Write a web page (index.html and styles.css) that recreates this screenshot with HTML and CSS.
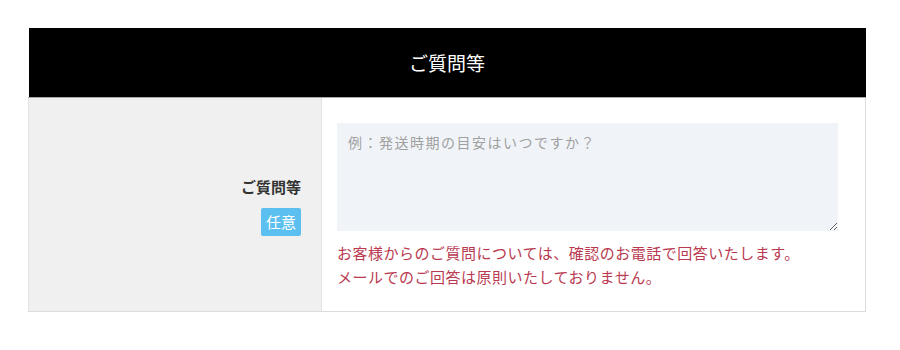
FILE: index.html
```html
<!DOCTYPE html>
<html lang="ja">
<head>
  <meta charset="utf-8">
  <title>ご質問等</title>
  <link rel="stylesheet" href="styles.css">
</head>
<body>

  <table class="form-table">
    <thead>
      <tr>
        <th colspan="2" class="form-title">ご質問等</th>
      </tr>
    </thead>
    <tbody>
      <tr>
        <th class="field-label">
          <span class="label-text">ご質問等</span>
          <span class="badge">任意</span>
        </th>
        <td class="field-body">
          <textarea class="question" placeholder="例：発送時期の目安はいつですか？"></textarea>
          <p class="note">お客様からのご質問については、確認のお電話で回答いたします。<br>メールでのご回答は原則いたしておりません。</p>
        </td>
      </tr>
    </tbody>
  </table>

</body>
</html>
```

FILE: styles.css
```css
body {
  margin: 0;
  padding: 28px 34px 0 28px;
  background-color: #fff;
  font-family: "Noto Sans CJK JP", "Noto Sans", sans-serif;
  color: #333;
}

.form-table {
  width: 838px;
  border-collapse: collapse;
}

.form-title {
  height: 69px;
  padding: 0;
  background-color: #000;
  color: #fff;
  font-size: 19px;
  font-weight: normal;
  text-align: center;
  border-bottom: 1px solid #a8a8a8;
}

.field-label {
  width: 272px;
  padding: 0 20px 0 0;
  background-color: #f0f0f0;
  border-left: 1px solid #e2e2e2;
  border-right: 1px solid #e2e2e2;
  border-bottom: 1px solid #dcdcdc;
  text-align: right;
  vertical-align: middle;
}

.label-text {
  display: block;
  font-size: 15px;
  font-weight: bold;
  color: #333;
  line-height: 22px;
  padding-top: 2px;
}

.badge {
  display: inline-block;
  margin-top: 10px;
  padding: 0 5px;
  height: 28px;
  line-height: 27px;
  background-color: #5bc0ef;
  color: #fff;
  font-size: 15px;
  font-weight: normal;
  border-radius: 2px;
}

.field-body {
  padding: 25px 27px 22px 15px;
  border-right: 1px solid #dcdcdc;
  border-bottom: 1px solid #dcdcdc;
  vertical-align: top;
}

.question {
  display: block;
  box-sizing: border-box;
  width: 100%;
  height: 108px;
  margin: 0;
  padding: 9px 11px;
  border: none;
  background-color: #f0f4f8;
  font-family: inherit;
  font-size: 14px;
  letter-spacing: 1.5px;
  color: #333;
}

.question::placeholder {
  color: #a0a0a0;
}

.note {
  margin: 10px 0 0 0;
  font-size: 15px;
  line-height: 24px;
  letter-spacing: 0.5px;
  color: #b93a50;
}
```
